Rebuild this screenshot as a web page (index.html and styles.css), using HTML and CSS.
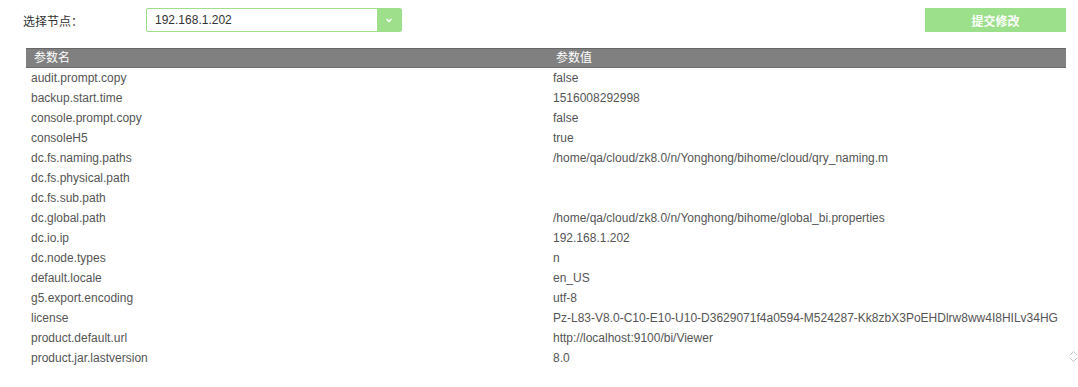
FILE: index.html
```html
<!DOCTYPE html>
<html lang="zh">
<head>
    <meta charset="UTF-8">
    <title>参数设置</title>
    <link rel="stylesheet" href="styles.css">
</head>
<body>
    <div class="toolbar">
        <span class="node-label">选择节点：</span>
        <div class="node-select">
            <span class="node-value">192.168.1.202</span>
            <span class="node-arrow">
                <svg width="8" height="5" viewBox="0 0 8 5"><path d="M1.5 1 L4 3.5 L6.5 1" fill="none" stroke="#ffffff" stroke-width="1.4"/></svg>
            </span>
        </div>
        <button class="submit-btn">提交修改</button>
    </div>

    <div class="param-table">
        <div class="head">参数名</div><div class="head">参数值</div>
        <div class="cell">audit.prompt.copy</div><div class="cell">false</div>
        <div class="cell">backup.start.time</div><div class="cell">1516008292998</div>
        <div class="cell">console.prompt.copy</div><div class="cell">false</div>
        <div class="cell">consoleH5</div><div class="cell">true</div>
        <div class="cell">dc.fs.naming.paths</div><div class="cell">/home/qa/cloud/zk8.0/n/Yonghong/bihome/cloud/qry_naming.m</div>
        <div class="cell">dc.fs.physical.path</div><div class="cell"></div>
        <div class="cell">dc.fs.sub.path</div><div class="cell"></div>
        <div class="cell">dc.global.path</div><div class="cell">/home/qa/cloud/zk8.0/n/Yonghong/bihome/global_bi.properties</div>
        <div class="cell">dc.io.ip</div><div class="cell">192.168.1.202</div>
        <div class="cell">dc.node.types</div><div class="cell">n</div>
        <div class="cell">default.locale</div><div class="cell">en_US</div>
        <div class="cell">g5.export.encoding</div><div class="cell">utf-8</div>
        <div class="cell">license</div><div class="cell">Pz-L83-V8.0-C10-E10-U10-D3629071f4a0594-M524287-Kk8zbX3PoEHDlrw8ww4I8HILv34HG</div>
        <div class="cell">product.default.url</div><div class="cell">http://localhost:9100/bi/Viewer</div>
        <div class="cell">product.jar.lastversion</div><div class="cell">8.0</div>
    </div>

    <span class="scroll-hint">
        <svg width="9" height="13" viewBox="0 0 9 13"><path d="M1 5 L4.5 1.5 L8 5 M1 8 L4.5 11.5 L8 8" fill="none" stroke="#c4c4c4" stroke-width="1"/></svg>
    </span>
</body>
</html>
```

FILE: styles.css
```css
body {
    margin: 0;
    padding: 0;
    font-family: 'Liberation Sans', 'Noto Sans CJK SC', sans-serif;
    font-size: 12px;
    color: #333333;
    background-color: #ffffff;
    position: relative;
    height: 387px;
    overflow: hidden;
}

.toolbar {
    display: flex;
    align-items: center;
    height: 24px;
    padding: 8px 12px 0 23px;
}

.node-label {
    width: 123px;
}

.node-select {
    display: flex;
    width: 254px;
    height: 22px;
    border: 1px solid #9ddf8a;
    border-radius: 2px;
}

.node-value {
    flex: 1;
    padding-left: 8px;
    line-height: 22px;
    color: #333333;
}

.node-arrow {
    width: 24px;
    background-color: #9ddf8a;
    display: flex;
    align-items: center;
    justify-content: center;
}

.submit-btn {
    margin-left: auto;
    width: 141px;
    height: 24px;
    border: none;
    background-color: #9de08c;
    color: #ffffff;
    font-family: 'Liberation Sans', 'Noto Sans CJK SC', sans-serif;
    font-size: 12px;
    font-weight: bold;
}

.param-table {
    display: grid;
    grid-template-columns: 522px 1fr;
    width: 1040px;
    margin: 16px 0 0 26px;
}

.head {
    background-color: #808080;
    color: #ffffff;
    height: 18px;
    line-height: 18px;
    padding-left: 8px;
    border-top: 1px solid #666666;
    border-bottom: 1px solid #6e6e6e;
}

.cell {
    height: 20px;
    line-height: 20px;
    padding-left: 5px;
    white-space: nowrap;
    color: #555555;
}

.scroll-hint {
    position: absolute;
    left: 1069px;
    top: 350px;
}
```
